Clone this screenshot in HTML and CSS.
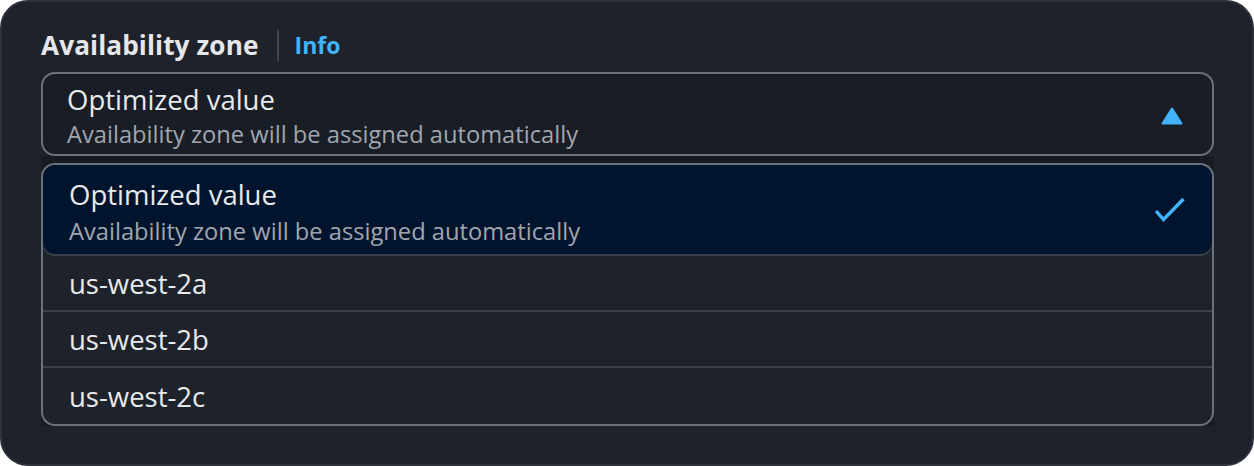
FILE: index.html
```html
<!DOCTYPE html>
<html>
<head>
<meta charset="utf-8">
<link rel="stylesheet" href="styles.css">
</head>
<body>
<div class="card">
  <div class="label-row">
    <span class="label">Availability zone</span>
    <span class="sep"></span>
    <span class="info">Info</span>
  </div>
  <div class="trigger">
    <div class="opt-text">
      <div class="opt-title">Optimized value</div>
      <div class="opt-desc">Availability zone will be assigned automatically</div>
    </div>
    <svg class="caret" width="22" height="18" viewBox="0 0 22 18"><path d="M11 1.5 L20.5 16.5 L1.5 16.5 Z" fill="#42b4ff" stroke="#42b4ff" stroke-width="2" stroke-linejoin="round"/></svg>
  </div>
  <div class="drop-wrap">
    <div class="dropdown">
      <div class="item selected">
        <div class="opt-text">
          <div class="opt-title">Optimized value</div>
          <div class="opt-desc">Availability zone will be assigned automatically</div>
        </div>
        <svg class="check" width="34" height="30" viewBox="0 0 34 30"><path d="M3 14 L10.5 22.5 L30.5 2" fill="none" stroke="#42b4ff" stroke-width="3.4"/></svg>
      </div>
      <div class="item">us-west-2a</div>
      <div class="item">us-west-2b</div>
      <div class="item last">us-west-2c</div>
    </div>
  </div>
</div>
</body>
</html>
```
FILE: styles.css
```css
* { box-sizing: border-box; }
html, body { margin: 0; padding: 0; background: #ffffff; }
body { font-family: "Open Sans", "Noto Sans", sans-serif; }
.card {
  width: 1254px;
  height: 466px;
  background: #1e232b;
  border: 2px solid #2c313a;
  border-radius: 28px;
  padding: 27px 39px 0 39px;
}
.label-row {
  display: flex;
  align-items: center;
  height: 32px;
  margin-bottom: 11px;
}
.label {
  color: #e6e7ea;
  font-weight: 700;
  font-size: 26.2px;
  letter-spacing: 0.1px;
}
.sep {
  width: 2px;
  height: 31px;
  background: #3f4550;
  margin: 0 16px 0 18px;
}
.info {
  color: #42b4ff;
  font-weight: 700;
  font-size: 23px;
}
.trigger {
  width: 1173px;
  height: 84px;
  border: 2px solid #6b717c;
  border-radius: 14px;
  background: #181d26;
  display: flex;
  align-items: flex-start;
  justify-content: space-between;
  padding: 10px 29px 0 24px;
}
.opt-text { display: flex; flex-direction: column; }
.opt-title {
  color: #e8e9ec;
  font-size: 27.5px;
  line-height: 32px;
}
.opt-desc {
  color: #a0a5ae;
  font-size: 23.7px;
  line-height: 32px;
  margin-top: 2px;
}
.caret { margin-top: 23px; }
.drop-wrap {
  width: 1173px;
  background: #161b22;
  padding-top: 7px;
  height: 270px;
}
.dropdown {
  border: 2px solid #6b717c;
  border-radius: 14px;
  background: #1e232b;
  overflow: hidden;
  height: 263px;
}
.item {
  height: 56px;
  display: flex;
  align-items: center;
  padding: 0 26px;
  color: #e8e9ec;
  font-size: 27.5px;
  border-bottom: 2px solid #3b414b;
}
.item.last { border-bottom: none; }
.item.selected {
  height: 89px;
  background: #00152d;
  border-radius: 12px;
  align-items: flex-start;
  justify-content: space-between;
  padding: 14px 25px 0 26px;
  border-bottom: none;
  box-shadow: 0 2px 0 #3b414b;
  margin-bottom: 2px;
}
.item.selected .opt-desc { margin-top: 4px; }
.check { margin-top: 18px; }
```
